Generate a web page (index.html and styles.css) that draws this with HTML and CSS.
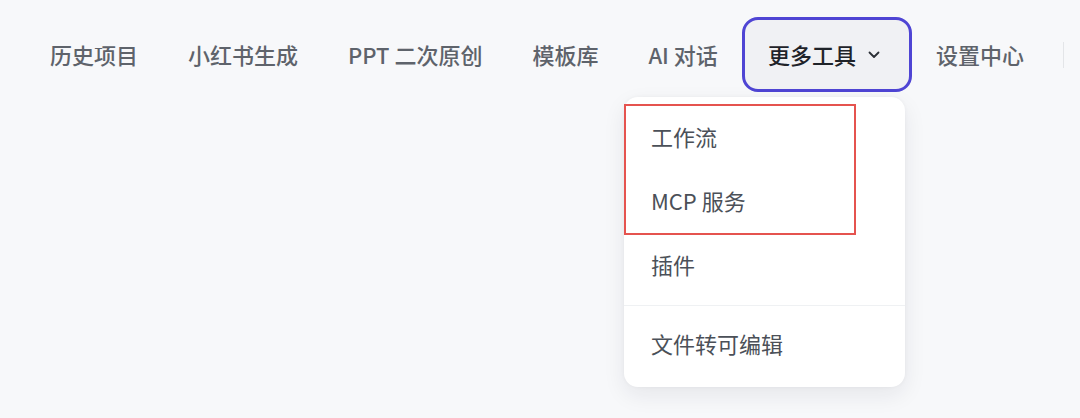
FILE: index.html
```html
<html>
	<head>
		<meta charset="utf-8">
		<link rel="stylesheet" href="styles.css">
	</head>
	<body>
		<nav class="nav">
			<a class="nav-item">历史项目</a>
			<a class="nav-item">小红书生成</a>
			<a class="nav-item">PPT 二次原创</a>
			<a class="nav-item">模板库</a>
			<a class="nav-item">AI 对话</a>
			<div class="more">
				<a class="nav-item active">更多工具
					<svg class="chev" width="12" height="8" viewBox="0 0 12 8"><path d="M1.5 1.5 L6 6 L10.5 1.5" fill="none" stroke="#2b2f36" stroke-width="1.8" stroke-linecap="round" stroke-linejoin="round"/></svg>
				</a>
				<div class="menu">
					<div class="mark"></div>
					<div class="menu-item">工作流</div>
					<div class="menu-item">MCP 服务</div>
					<div class="menu-item">插件</div>
					<div class="menu-sep"></div>
					<div class="menu-item">文件转可编辑</div>
				</div>
			</div>
			<a class="nav-item">设置中心</a>
			<span class="vline"></span>
		</nav>
	</body>
</html>
```

FILE: styles.css
```css
body {
	margin: 0;
	padding: 17px 0 0 0;
	background-color: #f7f8fa;
	font-family: "Noto Sans CJK SC", "Noto Sans", sans-serif;
	overflow: hidden;
}

.nav {
	display: flex;
	align-items: center;
	padding-left: 25px;
}

.nav-item {
	display: flex;
	align-items: center;
	height: 75px;
	box-sizing: border-box;
	padding: 0 25px 1px 25px;
	font-size: 22px;
	font-weight: 500;
	color: #5e636b;
	white-space: nowrap;
}

.more {
	position: relative;
	margin-left: -1px;
	margin-right: -1px;
}

.nav-item.active {
	border: 3px solid #4f45d4;
	border-radius: 16px;
	background-color: #f0f1f4;
	color: #1f2329;
	padding: 0 26px 1px 23px;
	width: 170px;
}

.chev {
	margin-left: 12px;
	margin-top: 2px;
}

.vline {
	width: 1px;
	height: 26px;
	background-color: #e3e5e8;
	margin-left: 14px;
}

.menu {
	position: absolute;
	top: 80px;
	right: 7px;
	width: 281px;
	padding: 9px 0 10px 0;
	background-color: #ffffff;
	border-radius: 14px;
	box-shadow: 0 8px 22px rgba(20, 30, 50, 0.08), 0 0 4px rgba(20, 30, 50, 0.04);
}

.menu-item {
	height: 64px;
	box-sizing: border-box;
	display: flex;
	align-items: center;
	padding: 0 0 4px 27px;
	font-size: 22px;
	color: #4b5058;
}

.menu-sep {
	height: 1px;
	background-color: #eff1f3;
	margin: 7px 0;
}

.mark {
	position: absolute;
	left: 0;
	top: 7px;
	width: 232px;
	height: 131px;
	box-sizing: border-box;
	border: 2px solid #e5534f;
}
```
